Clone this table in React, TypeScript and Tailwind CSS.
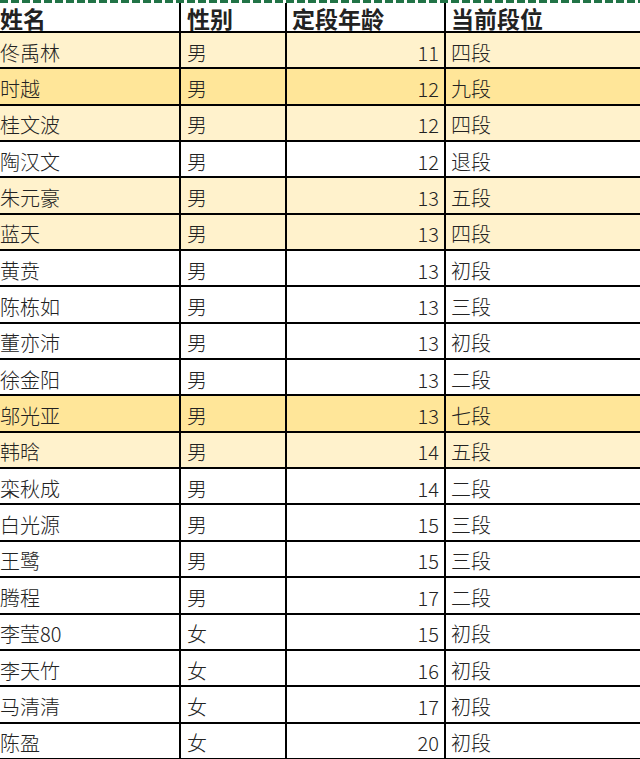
import React from "react"

type Row = { name: string; sex: string; age: number; rank: string; tone?: "light" | "dark" }

const rows: Row[] = [
  { name: "佟禹林", sex: "男", age: 11, rank: "四段", tone: "light" },
  { name: "时越", sex: "男", age: 12, rank: "九段", tone: "dark" },
  { name: "桂文波", sex: "男", age: 12, rank: "四段", tone: "light" },
  { name: "陶汉文", sex: "男", age: 12, rank: "退段" },
  { name: "朱元豪", sex: "男", age: 13, rank: "五段", tone: "light" },
  { name: "蓝天", sex: "男", age: 13, rank: "四段", tone: "light" },
  { name: "黄贲", sex: "男", age: 13, rank: "初段" },
  { name: "陈栋如", sex: "男", age: 13, rank: "三段" },
  { name: "董亦沛", sex: "男", age: 13, rank: "初段" },
  { name: "徐金阳", sex: "男", age: 13, rank: "二段" },
  { name: "邬光亚", sex: "男", age: 13, rank: "七段", tone: "dark" },
  { name: "韩晗", sex: "男", age: 14, rank: "五段", tone: "light" },
  { name: "栾秋成", sex: "男", age: 14, rank: "二段" },
  { name: "白光源", sex: "男", age: 15, rank: "三段" },
  { name: "王鹭", sex: "男", age: 15, rank: "三段" },
  { name: "腾程", sex: "男", age: 17, rank: "二段" },
  { name: "李莹80", sex: "女", age: 15, rank: "初段" },
  { name: "李天竹", sex: "女", age: 16, rank: "初段" },
  { name: "马清清", sex: "女", age: 17, rank: "初段" },
  { name: "陈盈", sex: "女", age: 20, rank: "初段" },
]

const toneClass = (tone?: Row["tone"]) =>
  tone === "dark" ? "bg-[#ffe699]" : tone === "light" ? "bg-[#fff2cc]" : "bg-white"

export default function App() {
  return (
    <div
      className="w-[640px] h-[759px] overflow-hidden bg-white text-[#222]"
      style={{ fontFamily: '"Noto Sans CJK SC", "Noto Sans", sans-serif' }}
    >
      {/* excel copy marquee */}
      <div className="h-[3px] w-full bg-[repeating-linear-gradient(90deg,#217346_0px,#217346_8px,transparent_8px,transparent_11px)]" />
      <div className="flex h-[30px] border-b-2 border-black text-[23px] font-bold leading-none">
        <div className="flex w-[181px] items-center border-r-2 border-black pt-[2px]">姓名</div>
        <div className="flex w-[106px] items-center border-r-2 border-black pl-[6px] pt-[2px]">性别</div>
        <div className="flex w-[159px] items-center border-r-2 border-black pl-[5px] pt-[2px]">定段年龄</div>
        <div className="flex flex-1 items-center pl-[5px] pt-[2px]">当前段位</div>
      </div>
      {rows.map((r) => (
        <div
          key={r.name}
          className={`flex h-[36.35px] border-b-2 border-black text-[20px] font-light leading-none ${toneClass(r.tone)}`}
        >
          <div className="flex w-[181px] items-center border-r-2 border-black pt-[5px]">{r.name}</div>
          <div className="flex w-[106px] items-center border-r-2 border-black pl-[6px] pt-[5px]">{r.sex}</div>
          <div className="flex w-[159px] items-center justify-end border-r-2 border-black pr-[5px] pt-[5px]">{r.age}</div>
          <div className="flex flex-1 items-center pl-[5px] pt-[5px]">{r.rank}</div>
        </div>
      ))}
    </div>
  )
}
